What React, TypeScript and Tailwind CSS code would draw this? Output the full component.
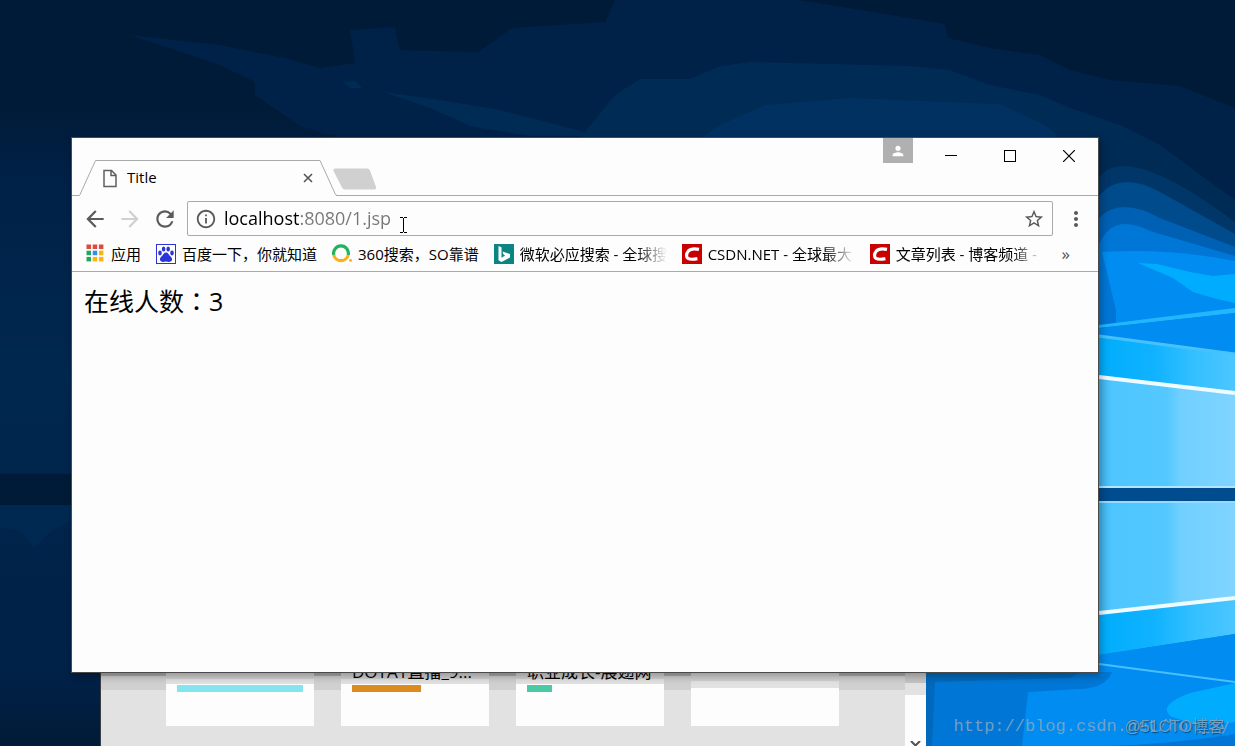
import React from 'react';
import {
  MdArrowBack,
  MdArrowForward,
  MdInfoOutline,
  MdMoreVert,
  MdPerson,
  MdRefresh,
  MdStarBorder,
} from 'react-icons/md';

function Wallpaper() {
  return (
    <svg className="absolute inset-0 h-full w-full" viewBox="0 0 1235 746" preserveAspectRatio="none" aria-hidden="true">
      <defs>
        <linearGradient id="night" x1="0" y1="0" x2="0" y2="1">
          <stop offset="0" stopColor="#001b37" />
          <stop offset="0.14" stopColor="#001b37" />
          <stop offset="0.24" stopColor="#002148" />
          <stop offset="0.5" stopColor="#00284f" />
          <stop offset="0.75" stopColor="#00234a" />
          <stop offset="0.9" stopColor="#002148" />
          <stop offset="1" stopColor="#001b37" />
        </linearGradient>
        <linearGradient id="pane" x1="0" y1="0" x2="1" y2="0">
          <stop offset="0" stopColor="#3fb4ec" />
          <stop offset="0.1" stopColor="#4fc6ff" />
          <stop offset="0.5" stopColor="#54c8ff" />
          <stop offset="0.6" stopColor="#70d0ff" />
          <stop offset="1" stopColor="#80d4ff" />
        </linearGradient>
        <linearGradient id="edge" x1="0" y1="0" x2="1" y2="0">
          <stop offset="0" stopColor="#00adfc" />
          <stop offset="0.4" stopColor="#10b2ff" />
          <stop offset="0.7" stopColor="#34c0ff" />
          <stop offset="1" stopColor="#4cc6ff" />
        </linearGradient>
      </defs>
      <rect width="1235" height="746" fill="url(#night)" />
      <path
        d="M130 35 L220 45 L285 58 L320 68 L355 63 L350 30 L395 27 L400 50 L478 52 L512 28 L605 22 L615 0 H799 L911 18 L945 24 L948 38 L990 48 L1040 55 L1070 70 L1110 80 L1180 86 L1235 108 V300 H340 V138 L300 126 L255 95 L255 82 L220 65 Z"
        fill="#002148"
      />
      <path
        d="M580 138 L615 95 L640 79 L690 79 L720 66 L750 62 L910 66 L950 70 L990 85 L1040 95 L1070 108 L1120 125 L1160 145 L1235 200 V300 H580 Z"
        fill="#002b54"
      />
      <path d="M700 138 L722 124 L765 105 L850 98 L1000 104 L1045 125 L1060 138 Z" fill="#003160" />
      <path d="M383 92 L440 100 L500 110 L600 136 H530 L470 126 L430 108 Z" fill="#002b54" />
      <path d="M343 82 L355 81 L362 88 L350 88 Z" fill="#002b54" />
      <rect y="474" width="100" height="31" fill="#001b37" />
      <path d="M0 505 H71 V520 L50 532 L34 548 L20 530 L0 528 Z" fill="#002952" />

      {/* light coming out of the window logo */}
      <path d="M1099 178 Q1125 140 1235 222 V746 H1099 Z" fill="#003768" />
      <path d="M1099 196 Q1120 170 1160 192 L1235 234 V746 H1099 Z" fill="#004b8c" />
      <path d="M1099 218 Q1120 196 1160 218 L1235 247 V746 H1099 Z" fill="#0060b4" />
      <path d="M1099 245 Q1112 212 1150 231 L1235 256 V746 H1099 Z" fill="#0076d6" />
      <path d="M1102 252 Q1170 248 1235 261 V746 H1116 V310 Z" fill="#008cf0" />
      <path d="M1138 263 L1157 264 L1190 272 L1213 276 L1235 274 V303 L1213 298 L1193 292 L1173 278 Z" fill="#00acfe" />
      <path d="M1099 325 L1235 308 V313 L1099 328 Z" fill="#22b6ff" />
      <path d="M1099 328 L1235 313 V354 L1099 335 Z" fill="#008cf0" />
      <path d="M1099 335 L1235 353 V393 L1099 377 Z" fill="url(#edge)" />
      <path d="M1099 336 L1235 354" stroke="#48c2ff" strokeWidth="3" />
      <path d="M1099 377 L1235 393 V487 H1099 Z" fill="url(#pane)" />
      <path d="M1099 377 L1235 393" stroke="#effbff" strokeWidth="4" />
      <rect x="1099" y="486" width="136" height="2" fill="#b0e6ff" />
      <rect x="1099" y="488" width="136" height="13" fill="#004c8e" />
      <path d="M1099 501 H1235 V598 L1099 613 Z" fill="url(#pane)" />
      <rect x="1099" y="501" width="136" height="2" fill="#94dcff" />
      <path d="M1099 613 L1235 598 V634 L1099 655 Z" fill="url(#edge)" />
      <path d="M1099 613 L1235 598" stroke="#effbff" strokeWidth="4" />
      <path d="M926 673 H1099 V655 L1235 634 V746 H926 Z" fill="#008cf0" />
      <path d="M926 672 H1112 Q1106 688 1080 689 L1028 692 L1022 746 H926 Z" fill="#0077d6" />
      <path d="M926 672 H1080 L1070 678 L935 682 L932 746 H926 Z" fill="#0069bc" />
      <path d="M1099 664 L1235 682" stroke="#48c0ff" strokeWidth="2" />
      <path d="M1235 683 L1190 693 Q1158 705 1170 716 Q1200 728 1235 722 Z" fill="#00acfe" />
      <path d="M1060 746 Q1150 748 1235 734 V746 Z" fill="#0077d6" />
    </svg>
  );
}

const cards = [
  { title: '', bar: 'w-[126px] bg-[#84e4f0]' },
  { title: 'DOTA1直播_9...', bar: 'w-[69px] bg-[#dc8c1c]' },
  { title: '职业成长-展翅网', bar: 'w-[25px] bg-[#4cc8a4]' },
];

function BackWindow() {
  return (
    <div className="absolute right-[309px] bottom-0 left-[100px] flex h-24 border-l border-[#3a3f46] bg-[linear-gradient(#a9a9a9_26px,#d0d0d0_26px_40px,#e2e2e2_40px)]">
      <div className="flex flex-1 gap-[27px] overflow-hidden pl-[65px]">
        {cards.map((card) => (
          <div
            key={card.bar}
            className="h-[76px] w-[148px] shrink-0 bg-[linear-gradient(#d0d0d0_29px,#e2e2e2_29px_34px,#fdfdfd_34px)] px-[11px] pt-[10px]"
          >
            <p className="h-[25px] text-[17px] leading-6 whitespace-nowrap text-black">{card.title}</p>
            <div className={`h-[7px] ${card.bar}`} />
          </div>
        ))}
        <div className="h-[76px] w-[148px] shrink-0 bg-[linear-gradient(#d0d0d0_31px,#e2e2e2_31px_38px,#fdfdfd_38px)]" />
      </div>
      <div className="flex w-[21px] flex-col items-center justify-end bg-[linear-gradient(#c4c4c4_33px,#e2e2e2_33px_45px,#fdfdfd_45px)]">
        <svg className="h-[5px] w-[11px]" viewBox="0 0 11 5" aria-hidden="true">
          <path d="M1 0 L5.5 4.5 L10 0" fill="none" stroke="#505050" strokeWidth="2" />
        </svg>
      </div>
    </div>
  );
}

function AppsIcon() {
  const colors = ['#dd4b3e', '#dd4b3e', '#dd4b3e', '#22a565', '#2f8fe8', '#fbb40c', '#22a565', '#fbb40c', '#fbb40c'];
  return (
    <svg className="size-5 shrink-0" viewBox="0 0 20 20" aria-hidden="true">
      {colors.map((color, i) => (
        <rect key={i} x={1.5 + (i % 3) * 6.2} y={0.5 + Math.floor(i / 3) * 6.2} width="4.5" height="4.5" fill={color} />
      ))}
    </svg>
  );
}

function BaiduIcon() {
  return (
    <svg className="size-5 shrink-0" viewBox="0 0 20 20" aria-hidden="true">
      <rect x="0.5" y="0.5" width="19" height="19" fill="#fff" stroke="#2a34d8" />
      <g fill="#2a34d8">
        <ellipse cx="4" cy="9" rx="1.8" ry="2.4" />
        <ellipse cx="7.6" cy="5" rx="1.8" ry="2.6" />
        <ellipse cx="12.2" cy="5" rx="1.8" ry="2.6" />
        <ellipse cx="16" cy="9" rx="1.8" ry="2.4" />
        <path d="M10 8.6 C12.2 8.6 12.6 10.6 14 12 C16 13.8 16.6 15 15.6 16.8 C14.4 18.6 12 17.6 10 17.6 C8 17.6 5.6 18.6 4.4 16.8 C3.4 15 4 13.8 6 12 C7.4 10.6 7.8 8.6 10 8.6 Z" />
      </g>
    </svg>
  );
}

function So360Icon() {
  return (
    <svg className="size-5 shrink-0" viewBox="0 0 20 20" aria-hidden="true">
      <g fill="none" strokeWidth="3.2">
        <path d="M1.8 11 A7.4 7.4 0 1 1 16.2 11" stroke="#22b35e" />
        <path d="M1.8 11 A7.4 7.4 0 0 0 16.2 11" stroke="#fbb016" />
      </g>
      <circle cx="18.6" cy="16.4" r="1.4" fill="#fbb016" />
    </svg>
  );
}

function BingIcon() {
  return (
    <svg className="size-5 shrink-0" viewBox="0 0 20 20" aria-hidden="true">
      <rect width="20" height="20" fill="#0c8484" />
      <path d="M4.5 2 L7.5 3.2 V13.8 L11.2 11.6 L9.6 10.8 L8.4 7.4 L16 10 V13.4 L7.5 18 L4.5 16.2 Z" fill="#fff" />
    </svg>
  );
}

function CsdnIcon() {
  return (
    <svg className="size-5 shrink-0" viewBox="0 0 20 20" aria-hidden="true">
      <rect width="20" height="20" fill="#c80000" />
      <path d="M17 5.4 C12.5 4.4 8.4 4.8 6.2 7.2 C4.2 9.6 4 12.8 5.8 14.2 C8 15.8 11.4 15.4 15.4 14.6" fill="none" stroke="#fff" strokeWidth="3.2" />
    </svg>
  );
}

const bookmarks = [
  { icon: AppsIcon, label: '应用', faded: false },
  { icon: BaiduIcon, label: '百度一下，你就知道', faded: false },
  { icon: So360Icon, label: '360搜索，SO靠谱', faded: false },
  { icon: BingIcon, label: '微软必应搜索 - 全球搜', faded: true },
  { icon: CsdnIcon, label: 'CSDN.NET - 全球最大', faded: true },
  { icon: CsdnIcon, label: '文章列表 - 博客频道 -', faded: true },
];

function TabStrip() {
  return (
    <div className="flex h-[58px] items-end border-b border-[#a9a9a9] pl-[7px]">
      <div className="relative -mb-px flex h-9 w-[258px] items-center pr-[21px] pl-[23px]">
        <svg className="absolute inset-0 h-full w-full" viewBox="0 0 258 36" aria-hidden="true">
          <path d="M0 36 L1 35 L16.5 0.5 H241 L257 35.5 V36 Z" fill="#fdfdfd" />
          <path d="M0 35.5 L1 34.5 L16.5 0.5 H241 L256.5 34.5 L258 35.5" fill="none" stroke="#a9a9a9" />
        </svg>
        <svg className="relative h-[19px] w-4" viewBox="0 0 16 19" aria-hidden="true">
          <path d="M2 1.5 H9.5 L14 6 V17.5 H2 Z M9 2 V6.5 H14" fill="none" stroke="#5f5f5f" strokeWidth="1.5" />
        </svg>
        <span className="relative ml-[9px] flex-1 pb-[2px] text-[15px] leading-5">Title</span>
        <button type="button" aria-label="Close tab" className="relative flex size-4 items-center justify-center">
          <svg className="size-[10px]" viewBox="0 0 10 10">
            <path d="M1 1 L9 9 M9 1 L1 9" stroke="#555" strokeWidth="1.6" />
          </svg>
        </button>
      </div>
      <button type="button" aria-label="New tab" className="mb-[5px] -ml-1">
        <svg className="h-[22px] w-11" viewBox="0 0 44 22">
          <path d="M2 0.5 H34 Q36 0.5 37 2.5 L43 19 Q43.5 21.5 41 21.5 H12 Q10 21.5 9 19.5 L0.5 3 Q0 0.5 2 0.5 Z" fill="#d0d0d0" />
        </svg>
      </button>
      <div className="ml-auto flex self-start">
        <button type="button" aria-label="Profile" className="mr-2 flex h-[25px] w-[30px] items-center justify-center bg-[#b0b0b0] text-white">
          <MdPerson size={16} />
        </button>
        <button type="button" aria-label="Minimize" className="flex h-9 w-[59px] items-center justify-center">
          <svg className="size-3" viewBox="0 0 12 12">
            <path d="M0 5.5 H12" stroke="#000" />
          </svg>
        </button>
        <button type="button" aria-label="Maximize" className="flex h-9 w-[59px] items-center justify-center">
          <svg className="size-3" viewBox="0 0 12 12">
            <rect x="0.5" y="0.5" width="11" height="11" fill="none" stroke="#000" />
          </svg>
        </button>
        <button type="button" aria-label="Close" className="flex h-9 w-[59px] items-center justify-center">
          <svg className="size-3" viewBox="0 0 12 12">
            <path d="M0 0 L12 12 M12 0 L0 12" stroke="#000" strokeWidth="1.2" />
          </svg>
        </button>
      </div>
    </div>
  );
}

function Toolbar() {
  return (
    <div className="flex h-10 items-end pl-[5px] text-[#5a5a5a]">
      <button type="button" aria-label="Back" className="flex h-[35px] w-[35px] items-center justify-center">
        <MdArrowBack size={26} />
      </button>
      <button type="button" aria-label="Forward" className="flex h-[35px] w-[35px] items-center justify-center text-[#d0d0d0]">
        <MdArrowForward size={26} />
      </button>
      <button type="button" aria-label="Reload" className="flex h-[35px] w-[35px] items-center justify-center">
        <MdRefresh size={26} />
      </button>
      <div className="ml-[5px] flex h-[35px] flex-1 items-center rounded-xs border border-[#a9a9a9] px-[7px]">
        <MdInfoOutline size={22} className="shrink-0" />
        <input
          type="text"
          aria-label="Address"
          defaultValue="localhost:8080/1.jsp"
          className="ml-[7px] h-7 min-w-0 flex-1 bg-[linear-gradient(to_right,#000_76px,#777_76px)] bg-clip-text pb-[2px] text-[18px] text-transparent outline-none"
        />
        <button type="button" aria-label="Bookmark this page">
          <MdStarBorder size={22} />
        </button>
      </div>
      <button type="button" aria-label="Menu" className="flex h-[35px] w-[45px] items-center justify-center">
        <MdMoreVert size={24} />
      </button>
    </div>
  );
}

function BookmarksBar() {
  return (
    <nav className="flex h-9 items-center gap-[15px] border-b border-[#a9a9a9] pl-[13px] text-[15px] leading-5 whitespace-nowrap">
      {bookmarks.map(({ icon: Icon, label, faded }) => (
        <a key={label} href="#" className="flex items-center gap-[6px]">
          <Icon />
          <span className={faded ? 'w-[147px] [mask-image:linear-gradient(to_right,#000_116px,transparent)]' : ''}>
            {label}
          </span>
        </a>
      ))}
      <button type="button" aria-label="More bookmarks" className="mr-7 ml-auto text-[17px] text-[#505050]">
        »
      </button>
    </nav>
  );
}

export default function App() {
  return (
    <div className="relative h-screen overflow-hidden bg-[#00234a] font-['Open_Sans','Noto_Sans_CJK_SC',sans-serif]">
      <Wallpaper />
      <BackWindow />

      <main className="absolute top-[137px] right-[136px] bottom-[73px] left-[71px] border border-[#4a4a4a] bg-[#fdfdfd] text-black shadow-[2px_3px_8px_rgba(0,0,0,0.3)]">
        <TabStrip />
        <Toolbar />
        <BookmarksBar />
        <p className="px-3 pt-[10px] text-[25px] leading-9">
          在线人数<span className="font-['Noto_Sans_CJK_TC',sans-serif]">：</span>3
        </p>
        {/* text cursor */}
        <svg className="absolute top-[79px] left-[328px] h-4 w-[7px]" viewBox="0 0 7 16" aria-hidden="true">
          <path d="M0 0.5 H3 M4 0.5 H7 M3.5 1 V15 M0 15.5 H3 M4 15.5 H7" stroke="#000" />
        </svg>
      </main>

      <p className="absolute right-[6px] bottom-[7px] font-['Liberation_Mono',monospace] text-[17px] leading-6 text-[#8fa9bd]/80">
        http://blog.csdn.net/hon_3y
      </p>
      <p className="absolute right-[11px] bottom-[7px] font-['Liberation_Sans','Noto_Sans_CJK_SC',sans-serif] text-[16px] leading-6 text-[#8fa9bd]/80 [text-shadow:1px_1px_1px_rgba(0,40,80,0.6)]">
        @51CTO博客
      </p>
    </div>
  );
}
